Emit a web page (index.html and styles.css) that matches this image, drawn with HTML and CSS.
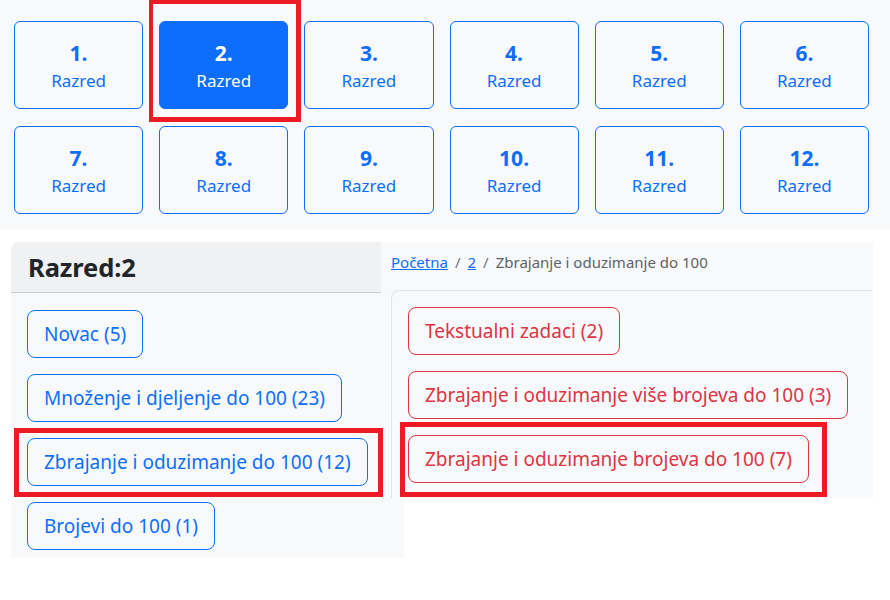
FILE: index.html
```html
<!DOCTYPE html>
<html lang="hr">
<head>
    <meta charset="UTF-8">
    <meta name="viewport" content="width=device-width, initial-scale=1.0">
    <title>Razred 2</title>
    <link rel="stylesheet" href="styles.css">
</head>
<body>

    <div class="grades">
        <a class="grade" href="#"><b>1.</b><span>Razred</span></a>
        <a class="grade active" href="#"><b>2.</b><span>Razred</span></a>
        <a class="grade" href="#"><b>3.</b><span>Razred</span></a>
        <a class="grade" href="#"><b>4.</b><span>Razred</span></a>
        <a class="grade" href="#"><b>5.</b><span>Razred</span></a>
        <a class="grade" href="#"><b>6.</b><span>Razred</span></a>
        <a class="grade" href="#"><b>7.</b><span>Razred</span></a>
        <a class="grade" href="#"><b>8.</b><span>Razred</span></a>
        <a class="grade" href="#"><b>9.</b><span>Razred</span></a>
        <a class="grade" href="#"><b>10.</b><span>Razred</span></a>
        <a class="grade" href="#"><b>11.</b><span>Razred</span></a>
        <a class="grade" href="#"><b>12.</b><span>Razred</span></a>
    </div>

    <div class="content">
        <div class="side">
            <div class="side-head">
                <h2>Razred:2</h2>
            </div>
            <div class="side-body">
                <a class="btn btn-blue" href="#">Novac (5)</a>
                <a class="btn btn-blue" href="#">Množenje i djeljenje do 100 (23)</a>
                <a class="btn btn-blue" href="#">Zbrajanje i oduzimanje do 100 (12)</a>
                <a class="btn btn-blue" href="#">Brojevi do 100 (1)</a>
            </div>
        </div>

        <div class="main">
            <nav class="crumbs">
                <a href="#">Početna</a>
                <span class="sep">/</span>
                <a href="#">2</a>
                <span class="sep">/</span>
                <span class="current">Zbrajanje i oduzimanje do 100</span>
            </nav>
            <div class="topics">
                <a class="btn btn-red" href="#">Tekstualni zadaci (2)</a>
                <a class="btn btn-red" href="#">Zbrajanje i oduzimanje više brojeva do 100 (3)</a>
                <a class="btn btn-red" href="#">Zbrajanje i oduzimanje brojeva do 100 (7)</a>
            </div>
        </div>
    </div>

    <!-- highlight frames from the screenshot -->
    <div class="mark mark-grade"></div>
    <div class="mark mark-side"></div>
    <div class="mark mark-topic"></div>

</body>
</html>
```

FILE: styles.css
```css
* {
    box-sizing: border-box;
    margin: 0;
    padding: 0;
}

body {
    font-family: 'Noto Sans', 'Open Sans', sans-serif;
    color: #212529;
    background-color: #fff;
    position: relative;
    min-height: 100vh;
}

a {
    text-decoration: none;
}

.grades {
    background-color: #f8f9fa;
    display: grid;
    grid-template-columns: repeat(6, 1fr);
    column-gap: 16px;
    row-gap: 17px;
    padding: 21px 21px 16px 14px;
}

.grade {
    height: 88px;
    padding-top: 3px;
    border: 1px solid #0d6efd;
    border-radius: 6px;
    color: #0d6efd;
    display: flex;
    flex-direction: column;
    align-items: center;
    justify-content: center;
}

.grade b {
    font-size: 21px;
    line-height: 1.2;
    font-weight: 700;
    margin-bottom: 3px;
}

.grade span {
    font-size: 17px;
    line-height: 1.3;
}

.grade.active {
    background-color: #0d6efd;
    color: #fff;
}

.content {
    display: flex;
    align-items: flex-start;
    margin-top: 12px;
    padding-left: 11px;
}

.side {
    width: 393px;
    background-color: #f8f9fa;
    border-top-left-radius: 8px;
}

.side-head {
    background-color: #f0f1f2;
    border-bottom: 1px solid #c9cbcd;
    border-top-left-radius: 8px;
    padding: 8px 17px;
    height: 51px;
}

.side-head h2 {
    font-size: 25.5px;
    font-weight: 700;
    line-height: 34px;
    letter-spacing: -0.1px;
}

.side-body {
    display: flex;
    flex-direction: column;
    align-items: flex-start;
    gap: 16px;
    padding: 17px 16px 8px;
}

.main {
    width: 492px;
    height: 256px;
    margin-left: -23px;
    background-color: #f8f9fa;
    overflow: hidden;
    padding-left: 10px;
}

.crumbs {
    display: flex;
    gap: 7px;
    font-size: 15px;
    line-height: 24px;
    padding: 8px 0 16px 0;
    color: #6c757d;
    white-space: nowrap;
}

.crumbs a {
    color: #0d6efd;
    text-decoration: underline;
}

.crumbs .current {
    color: #5c636a;
}

.topics {
    border-top: 1px solid #e3e5e7;
    border-left: 1px solid #e3e5e7;
    border-top-left-radius: 8px;
    padding: 16px;
    display: flex;
    flex-direction: column;
    align-items: flex-start;
    gap: 16px;
}

.btn {
    display: inline-block;
    font-size: 19px;
    line-height: 30px;
    padding: 8px 16px;
    border: 1px solid;
    border-radius: 8px;
    white-space: nowrap;
}

.btn-blue {
    color: #0d6efd;
    border-color: #0d6efd;
}

.btn-red {
    color: #dc3545;
    border-color: #dc3545;
}

.mark {
    position: absolute;
    border: 5px solid #ed1c24;
}

.mark-grade {
    left: 149px;
    top: 0;
    width: 152px;
    height: 122px;
    border-width: 4px 5px 5px 4px;
}

.mark-side {
    left: 14px;
    top: 428px;
    width: 369px;
    height: 69px;
}

.mark-topic {
    left: 400px;
    top: 422px;
    width: 427px;
    height: 75px;
}
```
